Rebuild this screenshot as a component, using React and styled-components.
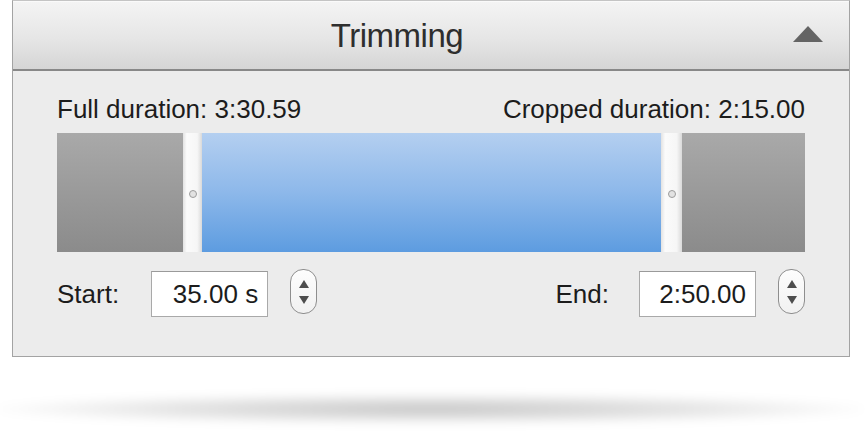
import React from "react";
import styled, { createGlobalStyle } from "styled-components";

const Global = createGlobalStyle`
  html, body { margin: 0; padding: 0; background: #ffffff; }
  body { font-family: "Liberation Sans", Arial, sans-serif; }
`;

const Page = styled.div`
  width: 865px;
  height: 435px;
  padding-left: 12px;
  box-sizing: border-box;
  overflow: hidden;
`;

const Panel = styled.section`
  width: 838px;
  box-sizing: border-box;
  border: 1px solid #a3a3a3;
  border-top-color: #c4c4c4;
  background: #ececec;
`;

const Header = styled.header`
  height: 70px;
  box-sizing: border-box;
  padding-right: 68px;
  display: flex;
  align-items: center;
  justify-content: center;
  position: relative;
  background: linear-gradient(#f4f4f4, #e6e6e6 55%, #d5d5d5);
  border-bottom: 2px solid #888888;
  box-shadow: inset 0 1px 0 #fafafa;
`;

const Title = styled.h2`
  margin: 0;
  font-weight: normal;
  font-size: 33px;
  letter-spacing: -0.5px;
  color: #2e2e2e;
  transform: translateY(1px);
`;

const Collapse = styled.button`
  position: absolute;
  right: 25px;
  top: 23px;
  width: 32px;
  height: 20px;
  padding: 0;
  border: none;
  background: transparent;
  display: flex;
  align-items: center;
  justify-content: center;
`;

const Body = styled.div`
  padding: 23px 44px 39px 44px;
  display: flex;
  flex-direction: column;
`;

const InfoRow = styled.div`
  display: flex;
  justify-content: space-between;
  align-items: baseline;
  font-size: 26px;
  color: #1c1c1c;
  line-height: 30px;
  margin-bottom: 9px;
`;

const Track = styled.div`
  height: 119px;
  display: flex;
`;

const Excluded = styled.div`
  width: ${(p) => p.$w}px;
  background: linear-gradient(#a9a9a9, #8b8b8b);
`;

const Selected = styled.div`
  flex: 1;
  background: linear-gradient(#b4cff0, #8db8ea 50%, #5d9ce0);
`;

const Handle = styled.div`
  width: ${(p) => p.$w}px;
  background: linear-gradient(90deg, #e2e2e2, #fbfbfb 20%, #f6f6f6 75%, #d9d9d9);
  display: flex;
  align-items: center;
  justify-content: center;
`;

const Knob = styled.span`
  width: 8px;
  height: 8px;
  border-radius: 50%;
  border: 1px solid #9c9c9c;
  background: #e2e2e2;
  box-sizing: border-box;
  margin-top: 2px;
`;

const Controls = styled.div`
  display: flex;
  justify-content: space-between;
  align-items: center;
  margin-top: 19px;
`;

const Field = styled.div`
  display: flex;
  align-items: center;
`;

const Label = styled.label`
  font-size: 26px;
  color: #1c1c1c;
  margin-right: ${(p) => p.$gap}px;
`;

const Input = styled.div`
  width: 117px;
  height: 46px;
  box-sizing: border-box;
  border: 1px solid #a9a9a9;
  border-top-color: #9a9a9a;
  background: #ffffff;
  display: flex;
  align-items: center;
  justify-content: flex-end;
  padding-right: 9px;
  font-size: 26px;
  color: #1c1c1c;
`;

const Stepper = styled.div`
  width: 27px;
  height: 45px;
  box-sizing: border-box;
  margin-left: 22px;
  margin-top: -5px;
  border: 1px solid #8e8e8e;
  border-radius: 13px;
  background: linear-gradient(#fdfdfd, #f1f1f1);
  display: flex;
  flex-direction: column;
  align-items: center;
  justify-content: center;
  gap: 8px;
`;

const Shadow = styled.div`
  margin: 36px 0 0 -14px;
  width: 865px;
  height: 32px;
  background: radial-gradient(ellipse 52% 50% at 50% 50%, rgba(0,0,0,0.22), rgba(0,0,0,0.11) 55%, rgba(0,0,0,0) 100%);
  filter: blur(4px);
`;

const Arrow = ({ up }) => (
  <svg width="10" height="8" viewBox="0 0 10 8">
    <polygon points={up ? "5,0 10,8 0,8" : "0,0 10,0 5,8"} fill="#4d4d4d" />
  </svg>
);

export default function App() {
  return (
    <Page>
      <Global />
      <Panel>
        <Header>
          <Title>Trimming</Title>
          <Collapse aria-label="Collapse">
            <svg width="32" height="18" viewBox="0 0 32 18">
              <polygon points="16,1 31,17 1,17" fill="#646464" />
            </svg>
          </Collapse>
        </Header>
        <Body>
          <InfoRow>
            <span>Full duration: 3:30.59</span>
            <span>Cropped duration: 2:15.00</span>
          </InfoRow>
          <Track>
            <Excluded $w={126} />
            <Handle $w={19}><Knob /></Handle>
            <Selected />
            <Handle $w={21}><Knob /></Handle>
            <Excluded $w={123} />
          </Track>
          <Controls>
            <Field>
              <Label $gap={32}>Start:</Label>
              <Input>35.00 s</Input>
              <Stepper><Arrow up /><Arrow /></Stepper>
            </Field>
            <Field>
              <Label $gap={30}>End:</Label>
              <Input>2:50.00</Input>
              <Stepper><Arrow up /><Arrow /></Stepper>
            </Field>
          </Controls>
        </Body>
      </Panel>
      <Shadow />
    </Page>
  );
}
